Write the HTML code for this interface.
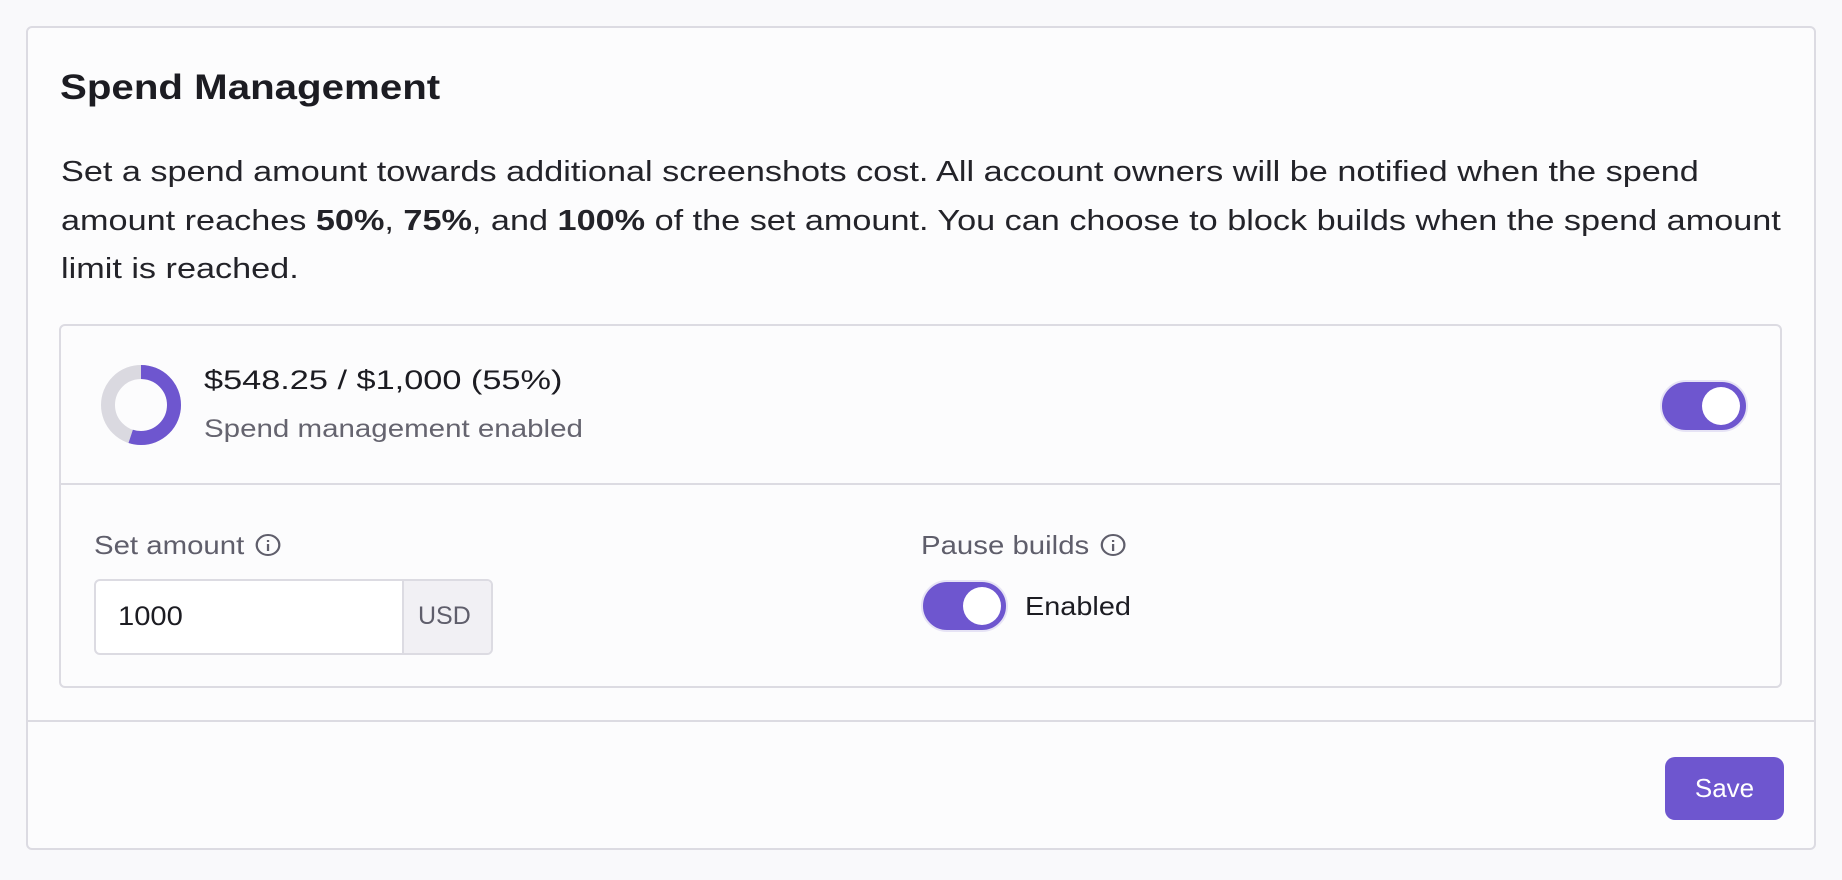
<!DOCTYPE html>
<html><head><style>
*{box-sizing:border-box;margin:0;padding:0}
body{width:1842px;height:880px;background:#f9f9fb;font-family:"Liberation Sans",sans-serif;color:#1c1c22;position:relative;overflow:hidden}
.card{position:absolute;left:26px;top:26px;width:1790px;height:824px;border:2px solid #dcdbe2;border-radius:6px;background:#fcfcfd}
.abs{position:absolute}
.sx{transform-origin:0 0;white-space:nowrap}
h1{position:absolute;left:32px;top:40px;font-size:35px;font-weight:bold;transform:scaleX(1.15);transform-origin:0 0;white-space:nowrap}
.desc{position:absolute;left:33px;top:120px;font-size:29px;line-height:48.7px;color:#232329;white-space:nowrap;transform:scaleX(1.18);transform-origin:0 0}
.inner{position:absolute;left:31px;top:296px;width:1723px;height:364px;border:2px solid #dcdbe2;border-radius:6px;background:#fcfcfd}
.div{position:absolute;left:0;right:0;top:157px;height:2px;background:#dcdbe2}
.toggle{position:absolute;background:#6e56cf;border-radius:30px;border:2px solid #e6e3f5}
.knob{position:absolute;background:#fff;border-radius:50%}
.lbl{font-size:26px;color:#5f5e6b;transform:scaleX(1.13);transform-origin:0 0;white-space:nowrap}
.info{display:inline-block;width:22px;height:22px;border:2px solid #5f5e6b;border-radius:50%;vertical-align:-2px;margin-left:10px;position:relative}
.info:before{content:"";position:absolute;left:8px;top:8px;width:2px;height:7px;background:#5f5e6b}
.info:after{content:"";position:absolute;left:8px;top:4px;width:2px;height:2px;background:#5f5e6b}
.foot{position:absolute;left:0;right:0;top:692px;height:2px;background:#dcdbe2}
</style></head><body>
<div class="card">
<h1>Spend Management</h1>
<div class="desc">Set a spend amount towards additional screenshots cost. All account owners will be notified when the spend<br>amount reaches <b>50%</b>, <b>75%</b>, and <b>100%</b> of the set amount. You can choose to block builds when the spend amount<br>limit is reached.</div>
<div class="inner">
<svg class="abs" style="left:38px;top:37px" width="84" height="84" viewBox="0 0 84 84">
<circle cx="42" cy="42" r="33" fill="none" stroke="#dad9e0" stroke-width="14"/>
<circle cx="42" cy="42" r="33" fill="none" stroke="#6e56cf" stroke-width="14" stroke-dasharray="114 300" transform="rotate(-90 42 42)"/>
</svg>
<div class="abs sx" style="left:143px;top:39px;font-size:27px;color:#1c1c22;transform:scaleX(1.27)">$548.25 / $1,000 (55%)</div>
<div class="abs sx" style="left:143px;top:89px;font-size:25px;color:#65646f;transform:scaleX(1.18)">Spend management enabled</div>
<div class="toggle" style="left:1599px;top:54px;width:88px;height:52px"><div class="knob" style="left:40px;top:5px;width:38px;height:38px"></div></div>
<div class="div"></div>
<div class="abs lbl" style="left:33px;top:204px">Set amount<span class="info"></span></div>
<div class="abs" style="left:33px;top:253px;width:399px;height:76px;border:2px solid #dcdbe2;border-radius:6px;background:#fff;overflow:hidden">
<div class="abs sx" style="left:22px;top:20px;font-size:27px;color:#1c1c22;transform:scaleX(1.08)">1000</div>
<div class="abs" style="left:306px;top:0;width:95px;height:76px;border-left:2px solid #dcdbe2;background:#f1f0f4;font-size:25px;color:#5f5e6b;padding:21px 0 0 14px">USD</div>
</div>
<div class="abs lbl" style="left:860px;top:204px">Pause builds<span class="info"></span></div>
<div class="toggle" style="left:860px;top:254px;width:87px;height:52px"><div class="knob" style="left:40px;top:5px;width:38px;height:38px"></div></div>
<div class="abs sx" style="left:964px;top:265px;font-size:26px;color:#1c1c22;transform:scaleX(1.11)">Enabled</div>
</div>
<div class="foot"></div>
<div class="abs" style="left:1637px;top:729px;width:119px;height:63px;background:#6e56cf;border-radius:10px;color:#fff;font-size:26px;text-align:center;line-height:63px">Save</div>
</div>
</body></html>
